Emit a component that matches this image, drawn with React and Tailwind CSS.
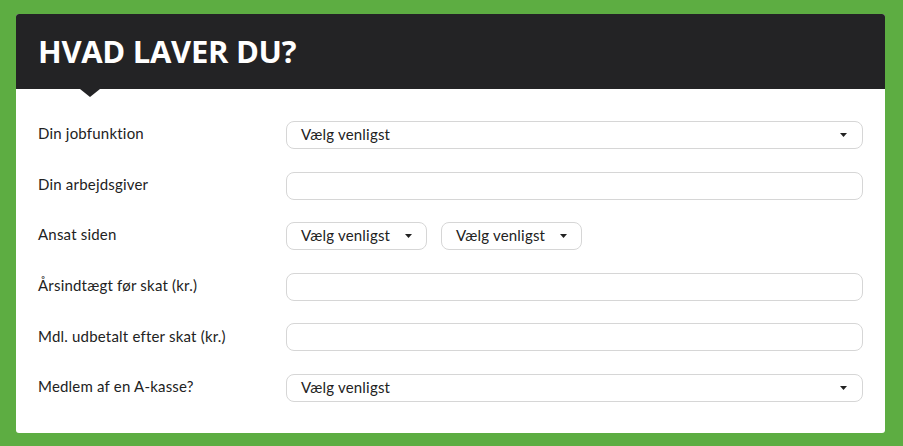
import React from "react";

const Caret = () => (
  <svg width="7" height="4" viewBox="0 0 7 4" className="shrink-0">
    <path d="M0 0h7L3.5 4z" fill="#222" />
  </svg>
);

const Select = ({ wide = true }) => (
  <div
    className={`h-[28px] rounded-[8px] border border-[#d6d6d6] bg-white flex items-center justify-between pl-[14px] ${
      wide ? "w-[577px] pr-[15px]" : "w-[141px] pr-[14px]"
    }`}
  >
    <span className="text-[15px] tracking-[0.2px] text-[#222] pb-[2px]">Vælg venligst</span>
    <Caret />
  </div>
);

const Input = () => (
  <div className="h-[28px] w-[577px] rounded-[8px] border border-[#d6d6d6] bg-white" />
);

const rows = [
  { label: "Din jobfunktion", field: <Select /> },
  { label: "Din arbejdsgiver", field: <Input /> },
  {
    label: "Ansat siden",
    field: (
      <div className="flex gap-[14px]">
        <Select wide={false} />
        <Select wide={false} />
      </div>
    ),
  },
  { label: "Årsindtægt før skat (kr.)", field: <Input /> },
  { label: "Mdl. udbetalt efter skat (kr.)", field: <Input /> },
  { label: "Medlem af en A-kasse?", field: <Select /> },
];

export default function App() {
  return (
    <div className="min-h-[446px] bg-[#5dad42] pt-[14px] pb-[13px] px-[16px] font-['Lato',sans-serif]">
      <div className="w-[869px] bg-white rounded-[3px] overflow-hidden">
        {/* Header */}
        <div className="relative h-[75px] bg-[#232325] flex items-center pl-[22px]">
          <h1 className="text-white font-bold text-[31px] tracking-[-0.3px] font-['Open_Sans',sans-serif] leading-none">
            HVAD LAVER DU?
          </h1>
          <div className="absolute left-[64px] top-[75px] w-0 h-0 border-l-[10px] border-r-[10px] border-t-[8px] border-l-transparent border-r-transparent border-t-[#232325]" />
        </div>

        {/* Form */}
        <div className="pt-[32px] pb-[31px] pl-[22px] flex flex-col gap-[22.6px]">
          {rows.map((row, i) => (
            <div key={i} className="flex items-center">
              <label className="w-[248px] text-[15px] tracking-[0.2px] text-[#222] pb-[3px]">{row.label}</label>
              {row.field}
            </div>
          ))}
        </div>
      </div>
    </div>
  );
}
